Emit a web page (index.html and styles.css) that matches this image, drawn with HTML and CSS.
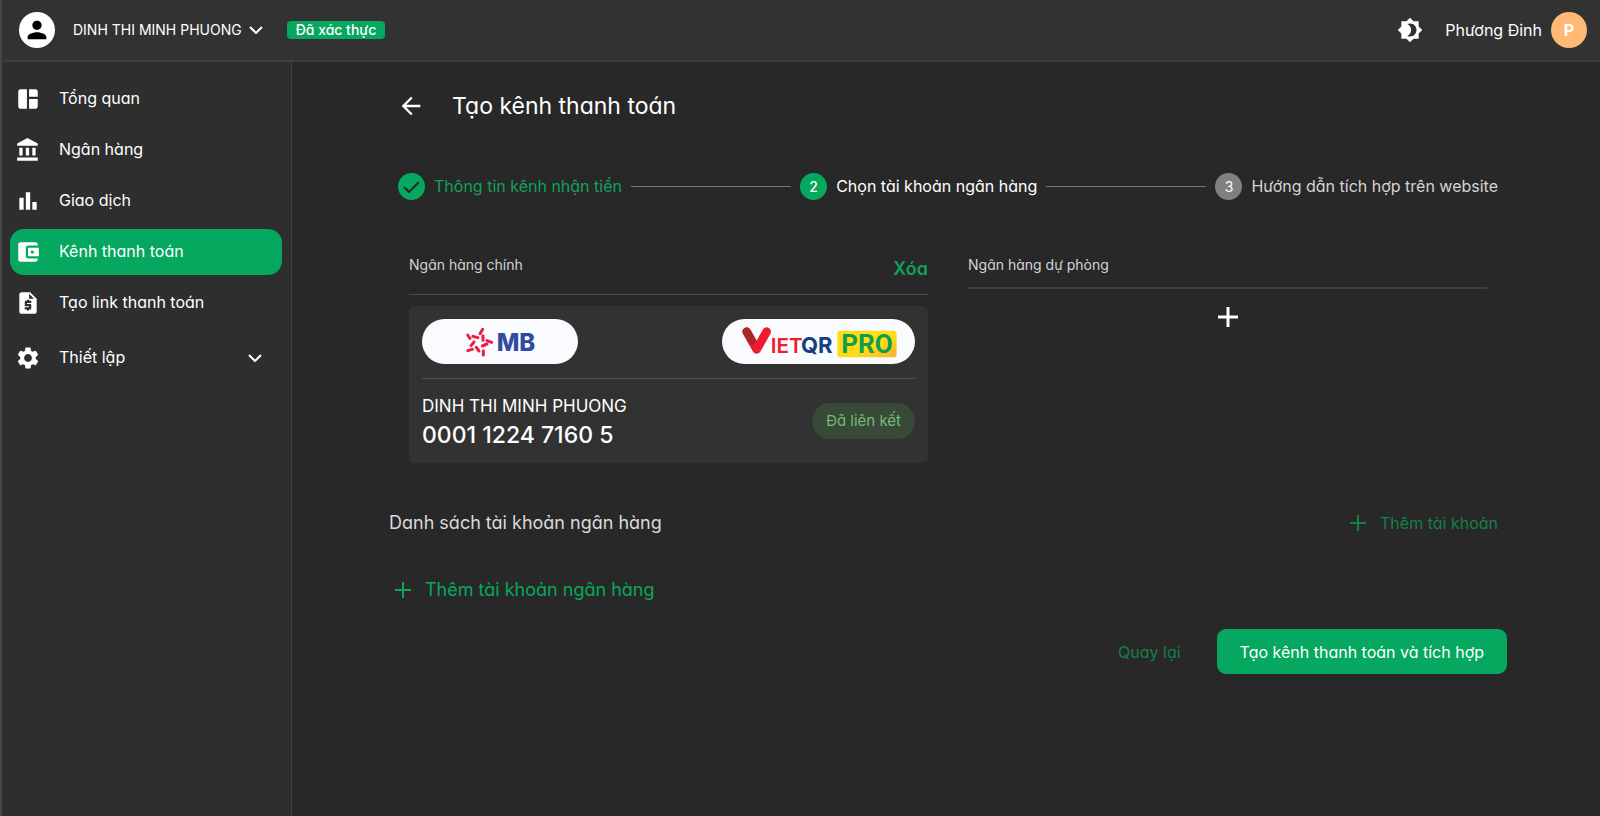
FILE: index.html
```html
<!DOCTYPE html>
<html lang="vi">
<head>
<meta charset="utf-8">
<meta name="viewport" content="width=device-width, initial-scale=1">
<title>Tạo kênh thanh toán</title>
<link rel="stylesheet" href="styles.css">
</head>
<body>
<div class="app">
  <header class="topbar">
    <button class="account" type="button">
      <span class="account-avatar"><svg width="28" height="28" viewBox="0 0 24 24" fill="#000"><path d="M12 12c2.210 0 4-1.790 4-4s-1.790-4-4-4-4 1.790-4 4 1.790 4 4 4zm0 2c-2.670 0-8 1.340-8 4v2h16v-2c0-2.660-5.330-4-8-4z"/></svg></span>
      <span class="account-name">DINH THI MINH PHUONG</span>
      <svg class="chevron" width="14" height="8" viewBox="0 0 14 8"><path d="M1 1l6 6 6-6"/></svg>
    </button>
    <span class="verified">Đã xác thực</span>
    <div class="topbar-right">
      <button class="icon-btn" type="button" aria-label="Chế độ tối"><svg width="26" height="26" viewBox="0 0 24 24" fill="#fff"><path d="M20 8.690V4h-4.690L12 .690 8.690 4H4v4.690L.690 12 4 15.310V20h4.690L12 23.310 15.310 20H20v-4.690L23.310 12 20 8.690zM12 18c-.890 0-1.740-.200-2.500-.550C11.560 16.500 13 14.420 13 12s-1.440-4.500-3.500-5.450C10.260 6.200 11.110 6 12 6c3.310 0 6 2.690 6 6s-2.690 6-6 6z"/></svg></button>
      <button class="user" type="button"><span>Phương Đinh</span><span class="user-avatar">P</span></button>
    </div>
  </header>

  <nav class="sidebar">
    <a class="nav-item" href="#"><svg viewBox="0 0 24 24"><path d="M11 21H5c-1.100 0-2-.900-2-2V5c0-1.100.900-2 2-2h6v18zm2 0h6c1.100 0 2-.900 2-2v-7h-8v9zm8-11V5c0-1.100-.900-2-2-2h-6v7h8z"/></svg><span>Tổng quan</span></a>
    <a class="nav-item" href="#"><svg viewBox="0 0 24 24"><path d="M4 10v7h3v-7H4zm6 0v7h3v-7h-3zM2 22h19v-3H2v3zm14-12v7h3v-7h-3zM11.500 1L2 6v2h19V6l-9.500-5z"/></svg><span>Ngân hàng</span></a>
    <a class="nav-item" href="#"><svg viewBox="0 0 24 24"><path d="M4 9h4v11H4zm12 4h4v7h-4zm-6-9h4v16h-4z"/></svg><span>Giao dịch</span></a>
    <a class="nav-item active" href="#" aria-current="page"><svg viewBox="0 0 24 24"><path d="M21 18v1c0 1.100-.900 2-2 2H5c-1.110 0-2-.900-2-2V5c0-1.100.890-2 2-2h14c1.100 0 2 .900 2 2v1h-9c-1.110 0-2 .900-2 2v8c0 1.100.890 2 2 2h9zm-9-2h10V8H12v8zm4-2.500c-.830 0-1.500-.670-1.500-1.500s.670-1.500 1.500-1.500 1.500.670 1.500 1.500-.670 1.500-1.500 1.500z"/></svg><span>Kênh thanh toán</span></a>
    <a class="nav-item" href="#"><svg viewBox="0 0 24 24"><path d="M14 2H6c-1.100 0-2 .900-2 2v16c0 1.100.890 2 2 2h12c1.100 0 2-.900 2-2V8l-6-6zm1 10h-4v1h3c.550 0 1 .450 1 1v3c0 .550-.450 1-1 1h-1v1h-2v-1H9v-2h4v-1h-3c-.550 0-1-.450-1-1v-3c0-.550.450-1 1-1h1V9h2v1h2v2zm-2-4V3.500L17.500 8H13z"/></svg><span>Tạo link thanh toán</span></a>
    <a class="nav-item settings" href="#"><svg viewBox="0 0 24 24"><path d="M19.140 12.940c.040-.300.060-.610.060-.940 0-.320-.020-.640-.070-.940l2.030-1.580c.180-.140.230-.410.120-.610l-1.920-3.320c-.120-.220-.370-.290-.590-.220l-2.390.960c-.500-.380-1.030-.700-1.620-.940l-.360-2.540c-.040-.240-.240-.410-.480-.410h-3.840c-.240 0-.430.170-.470.410l-.360 2.540c-.590.240-1.130.570-1.620.940l-2.390-.960c-.220-.080-.470 0-.590.220L2.740 8.870c-.120.210-.080.470.120.610l2.030 1.580c-.050.300-.090.630-.090.940s.020.640.070.940l-2.030 1.580c-.180.140-.230.410-.120.610l1.920 3.320c.120.220.370.290.590.220l2.390-.960c.500.380 1.030.700 1.620.940l.360 2.540c.050.240.240.410.480.410h3.840c.240 0 .440-.170.470-.410l.360-2.540c.590-.240 1.130-.560 1.620-.940l2.390.960c.220.080.470 0 .590-.220l1.920-3.320c.120-.220.070-.470-.120-.610l-2.010-1.580zM12 15.600c-1.980 0-3.600-1.620-3.600-3.600s1.620-3.600 3.600-3.600 3.600 1.620 3.600 3.600-1.620 3.600-3.600 3.600z"/></svg><span>Thiết lập</span><svg class="chevron" viewBox="0 0 14 8"><path d="M1 1l6 6 6-6"/></svg></a>
  </nav>

  <main class="content">
    <div class="page-head">
      <button class="icon-btn" type="button" aria-label="Quay về"><svg width="28" height="28" viewBox="0 0 24 24" fill="#fff"><path d="M20 11H7.830l5.590-5.590L12 4l-8 8 8 8 1.410-1.410L7.830 13H20v-2z"/></svg></button>
      <h1>Tạo kênh thanh toán</h1>
    </div>

    <ol class="stepper">
      <li class="step done"><span class="dot"><svg width="27" height="27" viewBox="0 0 27 27"><path d="M6 14l5 5 10-10" fill="none" stroke="#282828" stroke-width="2"/></svg></span><span class="step-label">Thông tin kênh nhận tiền</span></li>
      <li class="line"></li>
      <li class="step current"><span class="dot">2</span><span class="step-label">Chọn tài khoản ngân hàng</span></li>
      <li class="line"></li>
      <li class="step"><span class="dot">3</span><span class="step-label">Hướng dẫn tích hợp trên website</span></li>
    </ol>

    <div class="banks">
      <section class="slot">
        <div class="slot-head primary"><h2>Ngân hàng chính</h2><button class="remove" type="button">Xóa</button></div>
        <article class="bank">
          <div class="logos">
            <span class="pill mb">
              <svg width="72" height="30" viewBox="0 0 216 90" role="img" aria-label="MB">
                <path d="M56 7L48 20M11 24L18 34M27 28L42 32M57 26V40M69 41L83 46M30 45L21 56M69 51L55 57M11 71L25 67M37 61L45 72M58 71V84" fill="none" stroke="#ed1c46" stroke-width="9" stroke-linecap="round"/>
                <text x="98" y="71" class="mb-word">MB</text>
              </svg>
            </span>
            <span class="pill vietqr">
              <svg width="158" height="34" viewBox="0 0 474 102" role="img" aria-label="VietQR PRO">
                <path d="M20 20L50 73L80 20" fill="none" stroke="#ed1c2e" stroke-width="26" stroke-linecap="round" stroke-linejoin="round"/>
                <path d="M20 20L35 47" stroke="#a52a24" stroke-width="24" stroke-linecap="round"/>
                <text x="92" y="85" class="vq-red">IET</text>
                <text x="183" y="85" class="vq-blue">QR</text>
                <defs><linearGradient id="gold" x2="1" y2="1"><stop offset="0.600" stop-color="#ffdc17"/><stop offset="1" stop-color="#fbb034"/></linearGradient></defs>
                <rect x="292" y="17" width="178" height="80" rx="9" fill="url(#gold)"/>
                <text x="304" y="85" class="vq-pro">PRO</text>
              </svg>
            </span>
          </div>
          <div class="bank-info">
            <div><p class="holder">DINH THI MINH PHUONG</p><p class="number">0001 1224 7160 5</p></div>
            <span class="linked">Đã liên kết</span>
          </div>
        </article>
      </section>
      <section class="slot">
        <div class="slot-head"><h2>Ngân hàng dự phòng</h2></div>
        <button class="add-slot" type="button" aria-label="Thêm ngân hàng dự phòng"><svg width="20" height="20" viewBox="0 0 20 20"><path d="M10 0v20M0 10h20"/></svg></button>
      </section>
    </div>

    <div class="list-head">
      <h2>Danh sách tài khoản ngân hàng</h2>
      <button class="text-btn muted" type="button"><svg width="16" height="16" viewBox="0 0 16 16"><path d="M8 0v16M0 8h16"/></svg><span>Thêm tài khoản</span></button>
    </div>
    <button class="text-btn large" type="button"><svg width="16" height="16" viewBox="0 0 16 16"><path d="M8 0v16M0 8h16"/></svg><span>Thêm tài khoản ngân hàng</span></button>
    <div class="actions">
      <button class="text-btn muted" type="button">Quay lại</button>
      <button class="submit" type="button">Tạo kênh thanh toán và tích hợp</button>
    </div>
  </main>
</div>
</body>
</html>
```
FILE: styles.css
```css
* { box-sizing: border-box; margin: 0; padding: 0; }
body {
  background: #282828;
  color: #fff;
  font: 16px/24px Inter, "Noto Sans", sans-serif;
  font-feature-settings: "cv11";
}
button { background: none; border: 0; color: inherit; font: inherit; font-feature-settings: inherit; cursor: pointer; }
a { color: inherit; text-decoration: none; }
svg { flex: none; display: block; }
h1, h2 { font-weight: 400; }

.app {
  min-height: 100vh;
  display: grid;
  grid-template: 62px 1fr / 290px 1fr;
  border-left: 2px solid #484444;
}
.topbar {
  grid-column: 1 / -1;
  display: flex;
  align-items: center;
  padding: 0 13px 0 17px;
  background: #323232;
  border-bottom: 2px solid #3c3c3c;
}
.account { display: flex; align-items: center; font-size: 14px; }
.account-avatar { width: 36px; height: 36px; border-radius: 50%; background: #fff; display: grid; place-items: center; margin-right: 18px; }
.chevron { fill: none; stroke: #fff; stroke-width: 2; }
.account .chevron { margin-left: 7px; }
.verified { margin-left: 24px; padding: 0 9px; font-size: 14px; line-height: 18px; font-weight: 500; background: #05a85e; border-radius: 4px; }
.topbar-right { margin-left: auto; display: flex; align-items: center; gap: 22px; }
.user { display: flex; align-items: center; gap: 9px; }
.user-avatar { width: 36px; height: 36px; border-radius: 50%; background: #ffb974; font-weight: 700; line-height: 36px; text-align: center; }

.sidebar {
  background: #2e2e2e;
  border-right: 1px solid #414141;
  padding: 14px 9px 0 8px;
  display: flex;
  flex-direction: column;
  gap: 5px;
}
.nav-item { height: 46px; display: flex; align-items: center; gap: 18px; padding: 0 20px 0 5px; border-radius: 14px; }
.nav-item svg { width: 26px; height: 26px; fill: #fff; }
.nav-item span, .step-label { padding-bottom: 2px; }
.nav-item.active { background: #05a85e; }
.settings { margin-top: 4px; }
.nav-item .chevron { width: 14px; height: 8px; margin-left: auto; fill: none; }

.content { padding: 29px 93px 40px 97px; min-width: 0; }
.page-head { display: flex; align-items: center; gap: 27px; padding-left: 8px; height: 30px; }
.page-head h1 { font-size: 23px; line-height: 30px; }
.stepper { list-style: none; display: flex; align-items: center; gap: 9px; padding: 0 9px; margin-top: 52px; }
.step { display: flex; align-items: center; gap: 9px; color: #d4d4d4; white-space: nowrap; }
.step.done { color: #12a05c; }
.step.current { color: #fff; }
.dot { width: 27px; height: 27px; border-radius: 50%; background: #808080; color: #fff; font-size: 14px; line-height: 27px; text-align: center; }
.done .dot, .current .dot { background: #05a85e; }
.current .dot { font-weight: 500; }
.line { flex: 1; height: 1px; background: #757575; }

.banks { display: grid; grid-template-columns: 1fr 1fr; gap: 16px; padding: 0 8px; margin-top: 42px; }
.slot { padding: 12px; min-height: 233px; border-radius: 12px; box-shadow: 0 0 3px #262626; }
.slot-head { padding-bottom: 11px; border-bottom: 2px solid #3e3e3e; display: flex; justify-content: space-between; }
.slot-head h2 { font-size: 14px; line-height: 22px; color: #d4d4d4; }
.slot-head.primary { border-bottom: 1px solid #4a4a4a; }
.remove { font-size: 18px; line-height: 29px; font-weight: 600; color: #12a05c; }
.bank { margin-top: 11px; padding: 13px; background: #323232; border-radius: 6px; }
.logos { display: flex; justify-content: space-between; padding-bottom: 14px; border-bottom: 1px solid #505050; }
.pill { height: 45px; border-radius: 23px; background: #fafbfe; display: grid; place-items: center; }
.mb { width: 156px; }
.vietqr { width: 193px; }
.mb-word { font: 800 72px Inter, sans-serif; fill: #324a9e; }
.vq-red { font: 600 62px Inter, sans-serif; fill: #ed1c2e; }
.vq-blue { font: 700 66px Inter, sans-serif; fill: #153f80; }
.vq-pro { font: 700 78px Roboto, sans-serif; fill: #0e9e4c; }
.bank-info { display: flex; justify-content: space-between; align-items: center; padding-top: 13px; }
.holder { font-size: 17px; line-height: 28px; }
.number { font-size: 23px; line-height: 30px; font-weight: 500; }
.linked { padding: 0 14px; font-size: 15px; line-height: 36px; border-radius: 18px; background: #384938; color: #74ba79; }
.add-slot { width: 100%; height: 37px; margin-top: 9px; display: grid; place-items: center; border: 1px dashed #2b2b2b; }
.add-slot svg { stroke: #fff; stroke-width: 3; }

.list-head { display: flex; align-items: center; justify-content: space-between; padding-right: 9px; margin-top: 34px; }
.list-head h2 { font-size: 18px; line-height: 28px; color: #dadada; }
.text-btn { display: flex; align-items: center; gap: 14px; color: #05a85e; }
.text-btn svg { stroke: currentColor; stroke-width: 2; }
.muted { color: #13804a; }
.large { font-size: 18px; line-height: 28px; margin-top: 39px; padding-left: 6px; }
.actions { display: flex; justify-content: flex-end; align-items: center; gap: 36px; margin-top: 25px; }
.submit { height: 45px; padding: 0 23px; border-radius: 9px; background: #05a85e; }
```
